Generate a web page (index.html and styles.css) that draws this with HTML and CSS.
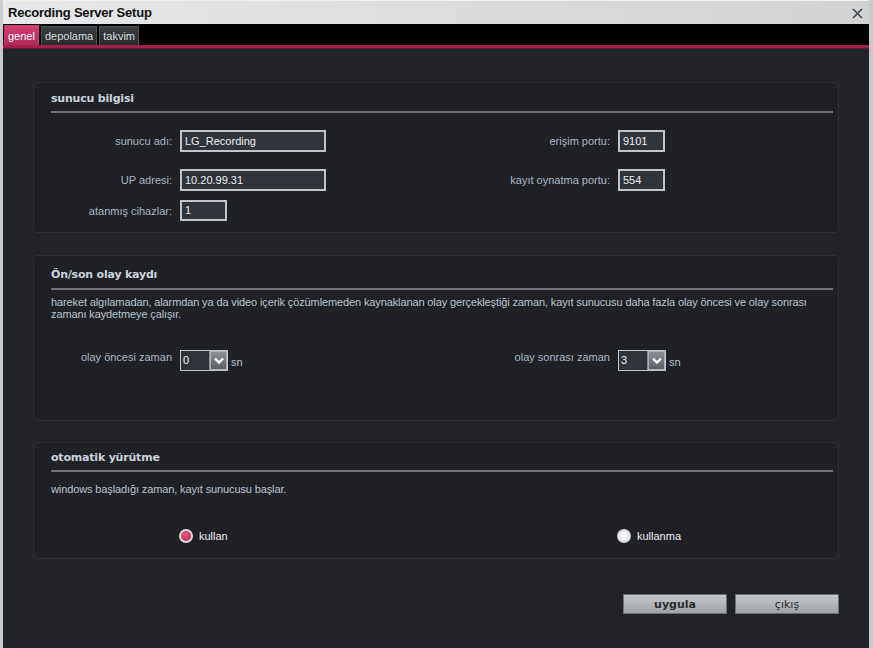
FILE: index.html
```html
<!DOCTYPE html>
<html lang="tr">
<head>
<meta charset="utf-8">
<title>Recording Server Setup</title>
<link rel="stylesheet" href="styles.css">
</head>
<body>
<div class="window">
  <div class="titlebar">
    <span class="title">Recording Server Setup</span>
    <svg class="close" width="11" height="11" viewBox="0 0 11 11"><path d="M1 1 L10 10 M10 1 L1 10" stroke="#45484a" stroke-width="1.6"/></svg>
  </div>
  <div class="tabbar">
    <div class="tab active">genel</div>
    <div class="tab">depolama</div>
    <div class="tab">takvim</div>
  </div>
  <div class="accent"></div>
  <div class="content">
    <section class="panel p1">
      <h2 class="ptitle">sunucu bilgisi</h2>
      <div class="grid">
        <label class="lbl r1">sunucu adı:</label>
        <div class="input wide r1">LG_Recording</div>
        <label class="lbl r1">erişim portu:</label>
        <div class="input small r1">9101</div>

        <label class="lbl r2">UP adresi:</label>
        <div class="input wide r2">10.20.99.31</div>
        <label class="lbl r2">kayıt oynatma portu:</label>
        <div class="input small r2">554</div>

        <label class="lbl r3">atanmış cihazlar:</label>
        <div class="input small short r3">1</div>
      </div>
    </section>

    <section class="panel p2">
      <h2 class="ptitle">Ön/son olay kaydı</h2>
      <p class="desc">hareket algılamadan, alarmdan ya da video içerik çözümlemeden kaynaklanan olay gerçekleştiği zaman, kayıt sunucusu daha fazla olay öncesi ve olay sonrası zamanı kaydetmeye çalışır.</p>
      <div class="grid spin-grid">
        <label class="lbl up">olay öncesi zaman</label>
        <div class="spinrow">
          <div class="spin"><span class="val">0</span><span class="btn"><svg width="12" height="8" viewBox="0 0 12 8"><path d="M2 1.5 L6 5.5 L10 1.5" fill="none" stroke="#fff" stroke-width="2.4"/></svg></span></div>
          <span class="unit">sn</span>
        </div>
        <label class="lbl up">olay sonrası zaman</label>
        <div class="spinrow">
          <div class="spin"><span class="val">3</span><span class="btn"><svg width="12" height="8" viewBox="0 0 12 8"><path d="M2 1.5 L6 5.5 L10 1.5" fill="none" stroke="#fff" stroke-width="2.4"/></svg></span></div>
          <span class="unit">sn</span>
        </div>
      </div>
    </section>

    <section class="panel p3">
      <h2 class="ptitle">otomatik yürütme</h2>
      <p class="desc">windows başladığı zaman, kayıt sunucusu başlar.</p>
      <div class="grid radio-grid">
        <span></span>
        <div class="radio"><span class="dot on"></span>kullan</div>
        <span></span>
        <div class="radio"><span class="dot"></span>kullanma</div>
      </div>
    </section>

    <div class="actions">
      <button class="button primary">uygula</button>
      <button class="button">çıkış</button>
    </div>
  </div>
</div>
</body>
</html>
```
FILE: styles.css
```css
* { box-sizing: border-box; }
html, body { margin: 0; padding: 0; }
body {
  width: 873px;
  height: 648px;
  overflow: hidden;
  font-family: "Liberation Sans", Arial, sans-serif;
  font-size: 11px;
  background: #222327;
}
.window {
  width: 873px;
  height: 648px;
  display: flex;
  flex-direction: column;
  border-left: 3px solid #c9cccd;
  border-right: 4px solid #c9cccd;
  background: #222327;
}
.titlebar {
  height: 24px;
  flex: none;
  display: flex;
  align-items: center;
  justify-content: space-between;
  padding: 0 6px 0 5px;
  background: linear-gradient(to right, #e6e8e9, #d0d2d3);
  border-top: 1px solid #f0f0f0;
}
.title {
  font-family: "Liberation Sans", Arial, sans-serif;
  font-weight: bold;
  font-size: 13px;
  color: #111;
  letter-spacing: -0.2px;
}
.close { display: block; margin-top: 2px; }
.tabbar {
  height: 21px;
  flex: none;
  background: #000;
  display: flex;
  align-items: flex-end;
  gap: 2px;
  padding-left: 1px;
}
.tab {
  height: 19px;
  padding: 0 3px;
  display: flex;
  align-items: center;
  font-size: 11px;
  color: #d8dde0;
  background: linear-gradient(#3a3e40, #262a2b);
  border: 1px solid #4e5254;
  border-bottom: none;
}
.tab.active {
  color: #fff;
  background: linear-gradient(#cf4070, #b3285a);
  border-color: #cf4070;
  height: 20px;
}
.accent {
  height: 4px;
  flex: none;
  background: #a51f4b;
  border-bottom: 1px solid #5a1a30;
}
.content {
  flex: 1;
  padding: 33px 30px 0 30px;
  display: flex;
  flex-direction: column;
}
.panel {
  border: 1px solid #303136;
  border-radius: 4px;
  background: #202125;
  padding: 8px 5px 0 17px;
}
.p1 { height: 151px; }
.p2 { height: 166px; margin-top: 22px; }
.p3 { height: 117px; margin-top: 21px; padding-top: 7px; }
.ptitle {
  margin: 0;
  font-family: "DejaVu Sans", sans-serif;
  font-size: 11px;
  font-weight: bold;
  color: #c9d2dc;
  line-height: 15px;
  padding-bottom: 5px;
  border-bottom: 2px solid #727272;
  letter-spacing: -0.2px;
}
.p2 .ptitle { padding-top: 3px; padding-bottom: 6px; }
.grid {
  display: grid;
  grid-template-columns: 121px 1fr auto 215px;
  column-gap: 8px;
  align-items: center;
}
.p1 .grid { margin-top: 17px; }
.lbl {
  text-align: right;
  color: #a9b7c6;
  font-size: 11px;
  white-space: nowrap;
}
.input {
  height: 22px;
  border: 2px solid #c2c5c8;
  background: #30343b;
  color: #eef0f2;
  font-size: 11px;
  line-height: 18px;
  padding-left: 3px;
}
.input.wide { width: 146px; }
.input.small { width: 47px; }
.input.short { height: 21px; line-height: 17px; }
.r2 { margin-top: 17px; }
.r3 { margin-top: 9px; }
.desc {
  margin: 6px 0 0 0;
  color: #b8c4d0;
  font-size: 11px;
  line-height: 12px;
  padding-right: 0;
  letter-spacing: -0.12px;
}
.p3 .desc { margin-top: 11px; }
.spin-grid { margin-top: 30px; }
.lbl.up { align-self: start; margin-top: 1px; }
.spinrow { display: flex; align-items: center; gap: 3px; }
.spin {
  display: flex;
  height: 21px;
  width: 48px;
  border: 1px solid #c2c5c8;
  background: #30343b;
}
.spin .val {
  flex: 1;
  color: #eef0f2;
  padding-left: 2px;
  line-height: 19px;
  border-right: 1px solid #8a8e92;
}
.spin .btn {
  width: 17px;
  display: flex;
  align-items: center;
  justify-content: center;
  background: linear-gradient(#8c9094, #5c6064);
  border: 1px solid #b0b4b8;
}
.unit { color: #b8c4d0; font-size: 11px; margin-top: 2px; }
.radio-grid { margin-top: 34px; }
.radio {
  display: flex;
  align-items: center;
  gap: 6px;
  color: #eef0f2;
  font-size: 11px;
  margin-left: -1px;
}
.dot {
  width: 14px;
  height: 14px;
  border-radius: 50%;
  border: 2px solid #d6d8da;
  background: radial-gradient(circle at 40% 35%, #ffffff, #e6e6e6);
}
.dot.on {
  background: radial-gradient(circle at 40% 35%, #e3577f, #c1234f);
}
.actions {
  display: flex;
  justify-content: flex-end;
  gap: 8px;
  margin-top: 35px;
}
.button {
  width: 104px;
  height: 20px;
  font-family: "DejaVu Sans", sans-serif;
  font-size: 11px;
  color: #2a2c2e;
  border: 1px solid #6a6e72;
  background: linear-gradient(#c4c8cb, #a0a4a8);
  padding: 0;
}
.button.primary { font-weight: bold; }
```
